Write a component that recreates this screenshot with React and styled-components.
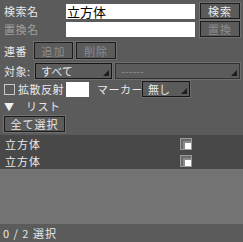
import React from 'react';
import styled, { createGlobalStyle } from 'styled-components';

const Global = createGlobalStyle`
    body {
        margin: 0;
        background: #5b5b5b;
        font-family: 'Noto Sans CJK JP', 'Noto Sans', sans-serif;
    }
`

const Panel = styled.div`
    width: 243px;
    height: 242px;
    display: flex;
    flex-direction: column;
    background: #5b5b5b;
    color: #e8e8e8;
    font-size: 11px;
    overflow: hidden;
    white-space: nowrap;
`

const Form = styled.div`
    display: flex;
    flex-direction: column;
    padding: 3px 3px 0 4px;
`

const Row = styled.div`
    display: flex;
    align-items: center;
    height: ${p => p.h || 16}px;
    margin-bottom: ${p => p.mb || 0}px;
    gap: ${p => p.gap || 0}px;
`

const Label = styled.span`
    width: ${p => p.w ? p.w + 'px' : 'auto'};
    flex: none;
    color: ${p => p.disabled ? '#a0a0a0' : '#e8e8e8'};
    line-height: 16px;
    letter-spacing: 0.5px;
`

const TextInput = styled.div`
    flex: 1;
    height: 15px;
    background: #fff;
    color: #000;
    font-size: 13px;
    line-height: 15px;
    padding-left: 1px;
    margin-right: 5px;
`

const Button = styled.div`
    width: ${p => p.w}px;
    height: ${p => p.h || 16}px;
    flex: none;
    box-sizing: border-box;
    border: 1px solid #1c1c1c;
    outline: 1px solid #707070;
    display: flex;
    align-items: center;
    justify-content: center;
    color: ${p => p.disabled ? '#8c8c8c' : '#e8e8e8'};
    background: #5b5b5b;
    letter-spacing: 1px;
`

const Select = styled.div`
    position: relative;
    width: ${p => p.w}px;
    flex: ${p => p.grow ? 1 : 'none'};
    height: 16px;
    box-sizing: border-box;
    border: 1px solid ${p => p.disabled ? '#333' : '#161616'};
    outline: 1px solid #6e6e6e;
    padding-left: 5px;
    line-height: 14px;
    color: ${p => p.disabled ? '#8c8c8c' : '#e8e8e8'};
    &::after {
        content: '';
        position: absolute;
        right: 2px;
        bottom: 2px;
        border-style: solid;
        border-width: 0 0 6px 6px;
        border-color: transparent transparent #1e1e1e transparent;
    }
`

const Check = styled.div`
    width: 9px;
    height: 9px;
    border: 1px solid #c8c8c8;
    flex: none;
    margin-right: 3px;
`

const Swatch = styled.div`
    width: 23px;
    height: 15px;
    background: #fff;
    flex: none;
    margin-right: 8px;
`

const Triangle = styled.span`
    font-size: 10px;
    width: 22px;
    color: #f0f0f0;
`

const List = styled.div`
    margin-top: 3px;
    background: #484848;
`

const Item = styled.div`
    height: 17px;
    display: flex;
    align-items: center;
    padding-left: 5px;
    letter-spacing: 1px;
`

const Name = styled.span`
    flex: 1;
`

const Empty = styled.div`
    flex: 1;
    background: #737373;
`

const Status = styled.div`
    height: 18px;
    background: #5b5b5b;
    padding-left: 3px;
    line-height: 18px;
    font-size: 11px;
    color: #e8e8e8;
    white-space: pre;
    letter-spacing: 1px;
`

function ObjIcon () {
    return (
        <svg width="12" height="12" viewBox="0 0 12 12" style={{ marginRight: 51 }}>
            <rect x="0.5" y="0.5" width="11" height="11" fill="#6a6a6a" stroke="#9a9a9a" />
            <rect x="3" y="3" width="8" height="8" fill="#8a8a8a" />
            <rect x="5" y="5" width="6" height="6" fill="#ffffff" />
        </svg>
    )
}

export default function App () {
    return (
        <Panel>
            <Global />
            <Form>
                <Row mb={2}>
                    <Label w={62}>検索名</Label>
                    <TextInput>立方体</TextInput>
                    <Button w={40}>検索</Button>
                </Row>
                <Row mb={5}>
                    <Label w={62} disabled>置換名</Label>
                    <TextInput />
                    <Button w={40} disabled>置換</Button>
                </Row>
                <Row h={17} mb={4} gap={3}>
                    <Label w={27}>連番</Label>
                    <Button w={39} h={17} disabled>追加</Button>
                    <Button w={40} h={17} disabled>削除</Button>
                </Row>
                <Row mb={2} gap={3}>
                    <Label w={28}>対象:</Label>
                    <Select w={77}>すべて</Select>
                    <Select grow disabled>------</Select>
                </Row>
                <Row mb={3}>
                    <Check />
                    <Label w={48}>拡散反射</Label>
                    <Swatch />
                    <Label w={45}>マーカー</Label>
                    <Select w={48}>無し</Select>
                </Row>
                <Row h={12} mb={4}>
                    <Triangle>▼</Triangle>
                    <Label>リスト</Label>
                </Row>
                <Row>
                    <Button w={61}>全て選択</Button>
                </Row>
            </Form>
            <List>
                <Item><Name>立方体</Name><ObjIcon /></Item>
                <Item><Name>立方体</Name><ObjIcon /></Item>
            </List>
            <Empty />
            <Status>0 / 2 選択</Status>
        </Panel>
    )
}
